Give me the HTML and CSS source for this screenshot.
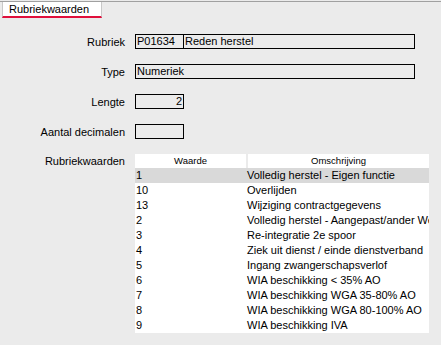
FILE: index.html
```html
<!DOCTYPE html>
<html lang="nl">
<head>
<meta charset="utf-8">
<title>Rubriekwaarden</title>
<link rel="stylesheet" href="styles.css">
</head>
<body>
<div class="window">
  <div class="tabbar">
    <div class="tab">Rubriekwaarden</div>
  </div>
  <div class="form">
    <div class="row">
      <div class="label">Rubriek</div>
      <div class="field short">P01634</div>
      <div class="field name">Reden herstel</div>
    </div>
    <div class="row">
      <div class="label">Type</div>
      <div class="field wide">Numeriek</div>
    </div>
    <div class="row">
      <div class="label">Lengte</div>
      <div class="field short num">2</div>
    </div>
    <div class="row">
      <div class="label">Aantal decimalen</div>
      <div class="field short"></div>
    </div>
    <div class="row table-row">
      <div class="label">Rubriekwaarden</div>
      <div class="grid">
        <div class="head">
          <div class="hcell c1">Waarde</div>
          <div class="hcell c2">Omschrijving</div>
        </div>
        <div class="body">
          <div class="trow selected"><span class="v">1</span><span class="d">Volledig herstel - Eigen functie</span></div>
          <div class="trow"><span class="v">10</span><span class="d">Overlijden</span></div>
          <div class="trow"><span class="v">13</span><span class="d">Wijziging contractgegevens</span></div>
          <div class="trow"><span class="v">2</span><span class="d">Volledig herstel - Aangepast/ander Werk</span></div>
          <div class="trow"><span class="v">3</span><span class="d">Re-integratie 2e spoor</span></div>
          <div class="trow"><span class="v">4</span><span class="d">Ziek uit dienst / einde dienstverband</span></div>
          <div class="trow"><span class="v">5</span><span class="d">Ingang zwangerschapsverlof</span></div>
          <div class="trow"><span class="v">6</span><span class="d">WIA beschikking &lt; 35% AO</span></div>
          <div class="trow"><span class="v">7</span><span class="d">WIA beschikking WGA 35-80% AO</span></div>
          <div class="trow"><span class="v">8</span><span class="d">WIA beschikking WGA 80-100% AO</span></div>
          <div class="trow"><span class="v">9</span><span class="d">WIA beschikking IVA</span></div>
        </div>
      </div>
    </div>
  </div>
</div>
</body>
</html>
```
FILE: styles.css
```css
html, body {
  margin: 0;
  padding: 0;
  background: #ebebeb;
}
body {
  font-family: "Liberation Sans", Arial, sans-serif;
  font-size: 11px;
  color: #000;
  width: 441px;
  height: 345px;
  overflow: hidden;
}
.window {
  padding-top: 1px;
}
.tabbar {
  border-top: 1px solid #a0a0a0;
  padding-left: 2px;
  height: 16px;
}
.tab {
  width: 92px;
  height: 14px;
  background: #fff;
  border-left: 1px solid #c8c8c8;
  border-right: 1px solid #c8c8c8;
  border-bottom: 2px solid #e0103c;
  padding-left: 6px;
  box-sizing: content-box;
  line-height: 14px;
}
.form {
  padding-top: 16px;
  display: flex;
  flex-direction: column;
  gap: 15px;
}
.row {
  display: flex;
  align-items: center;
  height: 15px;
}
.label {
  width: 125px;
  padding-right: 10px;
  text-align: right;
  white-space: nowrap;
}
.field {
  box-sizing: border-box;
  height: 15px;
  border: 1px solid #000;
  line-height: 13px;
  padding: 0 1px;
  white-space: nowrap;
  overflow: hidden;
}
.short { width: 49px; }
.name { width: 232px; margin-left: -1px; }
.wide { width: 280px; }
.num { text-align: right; }
.table-row {
  align-items: flex-start;
  height: auto;
}
.table-row .label {
  line-height: 14px;
}
.grid {
  width: 294px;
}
.head {
  display: flex;
  gap: 2px;
  height: 14px;
}
.hcell {
  background: #fff;
  text-align: center;
  font-size: 9.5px;
  line-height: 14px;
}
.c1 { width: 111px; }
.c2 { width: 181px; }
.body {
  background: #fff;
}
.trow {
  display: flex;
  height: 15px;
  line-height: 15px;
  padding-left: 1px;
  white-space: nowrap;
  overflow: hidden;
}
.trow.selected {
  background: #d9d9d9;
}
.v {
  width: 111px;
  flex: none;
}
.d {
  flex: none;
}
```
